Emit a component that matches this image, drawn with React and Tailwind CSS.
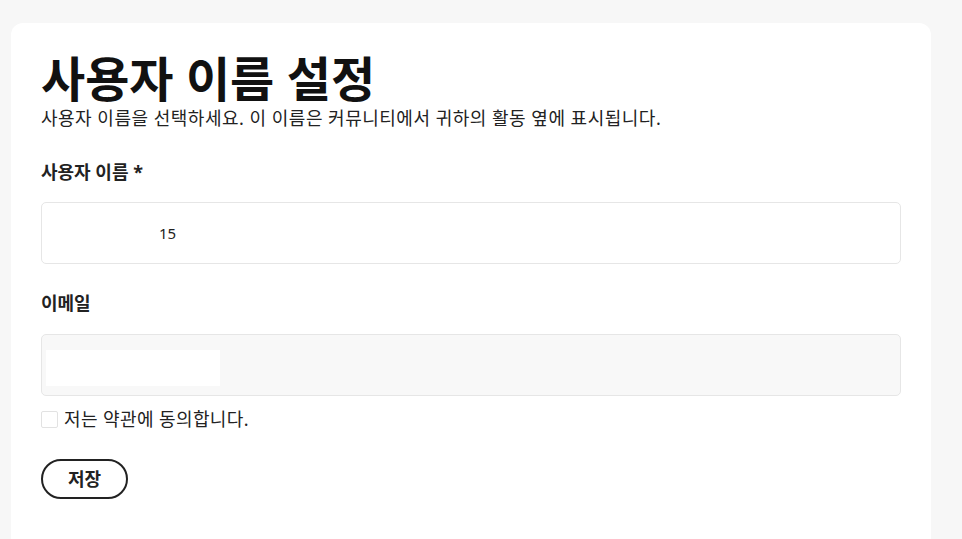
export default function App() {
  return (
    <div className="min-h-screen bg-[#f7f7f7] pt-[23px] pl-[11px] pr-[31px]" style={{ fontFamily: '"Noto Sans", "Noto Sans CJK KR", sans-serif' }}>
      <div className="bg-white rounded-t-[12px] w-[920px] h-[516px] px-[30px] pt-[30px] text-[#1a1a1a]">
        <h1 className="text-[48px] leading-[52px] font-bold text-[#111]">사용자 이름 설정</h1>
        <p className="mt-[1px] text-[18px] leading-[24px] tracking-[0.5px] text-[#222]">사용자 이름을 선택하세요. 이 이름은 커뮤니티에서 귀하의 활동 옆에 표시됩니다.</p>
        <div className="mt-[30px] text-[18px] leading-[24px] font-bold text-[#222]">사용자 이름 *</div>
        <div className="mt-[18px] h-[62px] w-[860px] border border-[#e6e6e6] rounded-[5px] flex items-center pl-[117px] text-[15px] text-[#222]">15</div>
        <div className="mt-[27px] text-[18px] leading-[24px] font-bold text-[#222]">이메일</div>
        <div className="mt-[19px] h-[62px] w-[860px] border border-[#e6e6e6] rounded-[5px] bg-[#f8f8f8] pl-[4px] pt-[15px]">
          <div className="w-[174px] h-[36px] bg-white"></div>
        </div>
        <label className="mt-[11px] flex items-center gap-[6px] text-[18px] leading-[24px] tracking-[0.4px] text-[#222]">
          <span className="w-[17px] h-[17px] border border-[#e2e2e2] rounded-[2px] bg-white"></span>
          저는 약관에 동의합니다.
        </label>
        <button className="mt-[28px] w-[87px] h-[40px] rounded-full border-2 border-[#222] text-[18px] font-bold text-[#222] bg-white">저장</button>
      </div>
    </div>
  );
}
